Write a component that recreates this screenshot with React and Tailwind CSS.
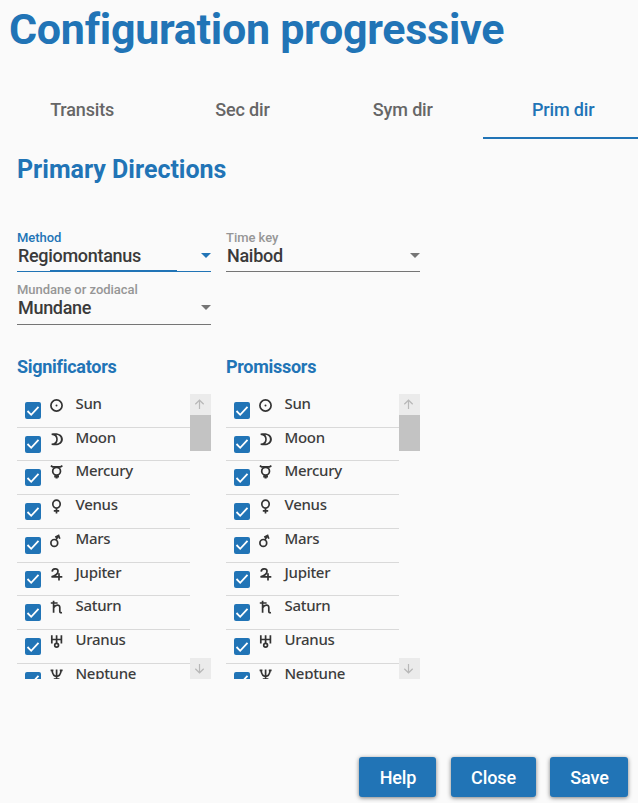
import React from "react";

const GLYPHS = {
  Sun: (
    <>
      <circle cx="7.5" cy="7.5" r="5.6" />
      <circle cx="7.5" cy="7.5" r="1" fill="#333" stroke="none" />
    </>
  ),
  Moon: (
    <path
      d="M2.6 1.6 C9 0.2 13.9 2.6 13.9 7.3 C13.9 12 9 14.4 2.6 12.9 V11.6 C5.6 11.4 7.2 9.8 7.2 7.3 C7.2 4.8 5.6 3.2 2.6 2.9 Z M7.4 2.8 C9.3 5.4 9.3 9.2 7.4 11.8 C10.2 11.6 11.9 9.8 11.9 7.3 C11.9 4.8 10.2 3 7.4 2.8 Z"
      fill="#333"
      fillRule="evenodd"
      stroke="none"
    />
  ),
  Mercury: (
    <>
      <path d="M1.8 0.8 L3.6 1.8 H11.6 L13.4 0.8" />
      <circle cx="7.6" cy="6.2" r="3.9" />
      <path d="M5.2 11.3 H10 M7.6 10 V13.4" strokeWidth="2.2" />
    </>
  ),
  Venus: (
    <>
      <ellipse cx="7.5" cy="5.1" rx="3.7" ry="4" />
      <path d="M7.5 9.2 V14.6 M4.8 11.9 H10.2" />
    </>
  ),
  Mars: (
    <>
      <circle cx="5.3" cy="9.9" r="3.4" />
      <path d="M6.9 7 L9.3 2.9 M6.2 4.2 L9.6 2.4 L10.8 5.8" />
    </>
  ),
  Jupiter: (
    <path d="M3.2 4.6 C3.4 1.3 8.6 0.9 9 4 C9.2 6.5 6 8.8 2.5 9.8 H13.3 M10 6.2 V13.4" />
  ),
  Saturn: (
    <path d="M4.6 0.8 V12.8 M1.8 3 H8.6 M4.8 7.6 C6.5 4.6 10.8 4.2 10.8 7.6 V11.2 C10.8 12.5 11.4 12.9 13 12.7" />
  ),
  Uranus: (
    <>
      <path d="M2.8 1.2 V9.6 M12.4 1.2 V9.6 M2.8 5.5 H12.4 M7.6 1.2 V9.3" />
      <circle cx="7.6" cy="11.2" r="1.9" />
    </>
  ),
  Neptune: (
    <path d="M1.6 2.4 H4.4 M10.8 2.4 H13.6 M3 2.4 C3.6 6.4 5.2 8.4 7.6 8.4 C10 8.4 11.6 6.4 12.2 2.4 M7.6 1.5 V14 M4.8 11 H10.4" />
  ),
};

function Arrow({ down }) {
  return (
    <div className="flex h-[21px] w-[21px] shrink-0 items-center justify-center bg-[#ebebeb] pr-[2px]">
      <svg width="11" height="11" viewBox="0 0 11 11" fill="none" stroke="#b8b8b8" strokeWidth="1.2">
        {down ? <path d="M5.5 1 V9.5 M1.3 5.7 L5.5 9.8 L9.7 5.7" /> : <path d="M5.5 10 V1.5 M1.3 5.3 L5.5 1.2 L9.7 5.3" />}
      </svg>
    </div>
  );
}

function PointList({ title }) {
  return (
    <section className="w-[194px]">
      <h3 className="h-[38px] text-[18px] leading-[22px] font-bold tracking-[-0.28px] text-[#2174b6]">{title}</h3>
      <div className="flex h-[285px]">
        <ul className="h-[285px] w-[173px] overflow-hidden">
          {Object.keys(GLYPHS).map((name) => (
            <li key={name} className="flex h-[33.72px] items-start border-b border-[#d9d9d9] pl-2">
              <span className="mt-2 flex h-[17px] w-4 shrink-0 items-center justify-center rounded-[2px] bg-[#2174b6]">
                <svg width="14" height="12" viewBox="0 0 14 12" fill="none" stroke="#fff" strokeWidth="1.8">
                  <path d="M1.5 6 L5.2 9.8 L12.5 1.8" />
                </svg>
              </span>
              <svg className="mt-1 ml-2 shrink-0" width="16" height="18" viewBox="0 0 16 18" fill="none" stroke="#333" strokeWidth="1.7">
                {GLYPHS[name]}
              </svg>
              <span className="-mt-px ml-[10.5px] font-['Noto_Sans',sans-serif] text-[15px] leading-[20px] font-medium tracking-[-0.3px] text-[#3d3d3d]">
                {name}
              </span>
            </li>
          ))}
        </ul>
        <div className="flex h-[285px] w-[21px] flex-col">
          <Arrow />
          <div className="h-9 bg-[#c3c3c3]" />
          <div className="grow" />
          <Arrow down />
        </div>
      </div>
    </section>
  );
}

function Select({ label, value, active, tall }) {
  return (
    <div className="h-[52px] w-[194px]">
      <div className={"text-[13px] leading-[15px] font-medium tracking-[-0.03px] " + (active ? "text-[#2174b6]" : "text-[#969696]")}>{label}</div>
      <div
        className={
          "flex items-start justify-between border-b " +
          (tall ? "h-[28px] " : "h-[27px] ") +
          (active ? "border-[#2174b6]" : "border-[#757575]")
        }
      >
        <span className="pl-px text-[18px] leading-[22px] font-medium tracking-[-0.3px] text-[#3a3a3a]">{value}</span>
        <svg className="mt-[8px]" width="10" height="5" viewBox="0 0 10 5">
          <path d="M0 0 H10 L5 5 Z" fill={active ? "#2174b6" : "#757575"} />
        </svg>
      </div>
      {active && <div className="-mt-[2px] ml-[33px] h-[2px] w-[127px] bg-[#2174b6]" />}
    </div>
  );
}

function Button({ children, width }) {
  return (
    <button className={"h-10 rounded-[3px] bg-[#2174b6] pl-[1px] text-[18px] font-medium tracking-[-0.1px] text-white shadow-[0_1px_4px_rgba(0,0,0,0.5)] " + width}>
      {children}
    </button>
  );
}

export default function App() {
  return (
    <main className="flex h-[803px] w-[638px] flex-col overflow-hidden bg-[#fafafa] font-[Roboto,sans-serif]">
      <h1 className="h-[81px] pt-[3px] pl-[9px] text-[43px] leading-[52px] font-bold tracking-[-0.27px] whitespace-nowrap text-[#2174b6]">
        Configuration progressive
      </h1>
      <nav className="flex h-[58px] pl-[2px] text-[18px] font-medium tracking-[-0.15px] text-[#666]">
        <span className="flex w-[160.33px] shrink-0 items-center justify-center pb-[2px]">Transits</span>
        <span className="flex w-[160.33px] shrink-0 items-center justify-center pb-[2px]">Sec dir</span>
        <span className="flex w-[160.33px] shrink-0 items-center justify-center pb-[2px]">Sym dir</span>
        <span className="flex w-[160.33px] shrink-0 items-center justify-center border-b-2 border-[#2174b6] text-[#2174b6]">Prim dir</span>
      </nav>
      <div className="pt-[16px] pl-[17px]">
        <h2 className="h-[75px] text-[25px] leading-[30px] font-bold text-[#2174b6]">Primary Directions</h2>
        <div className="grid grid-cols-[194px_194px] gap-x-[15px]">
          <Select label="Method" value="Regiomontanus" active />
          <Select label="Time key" value="Naibod" />
          <Select label="Mundane or zodiacal" value="Mundane" tall />
        </div>
        <div className="mt-[22px] flex gap-[15px]">
          <PointList title="Significators" />
          <PointList title="Promissors" />
        </div>
      </div>
      <footer className="mt-auto flex justify-end gap-[14.5px] pr-[10px] pb-[6px]">
        <Button width="w-[77px]">Help</Button>
        <Button width="w-[85px]">Close</Button>
        <Button width="w-[78px]">Save</Button>
      </footer>
    </main>
  );
}
